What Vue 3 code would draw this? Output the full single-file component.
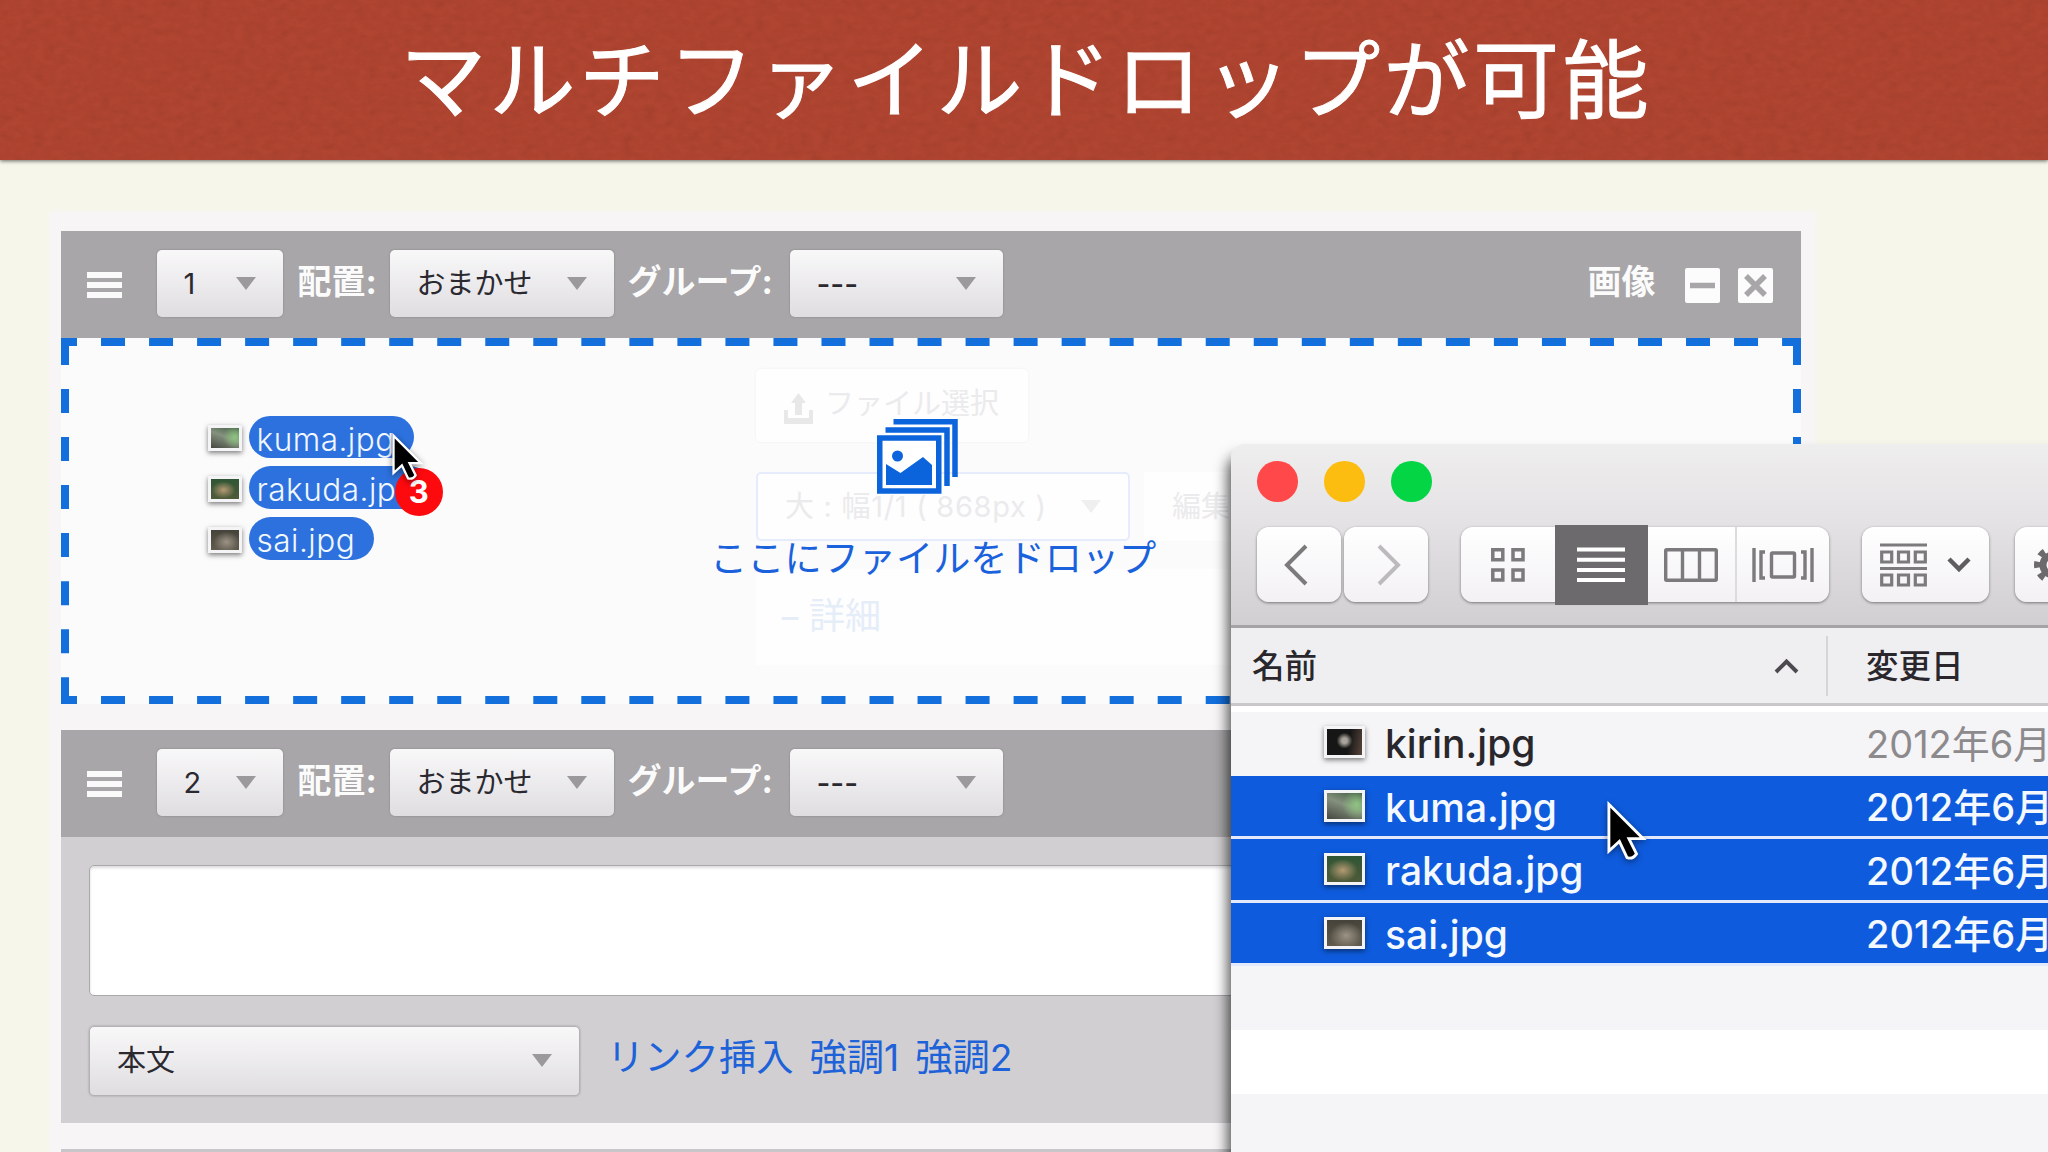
<script setup>
import { ref } from 'vue'

const units = ref([
  { id: 1, type: 'image' },
  { id: 2, type: 'text' }
])

const dragging = ref([
  { name: 'kuma.jpg', kind: 'kuma', width: 165 },
  { name: 'rakuda.jpg', kind: 'rakuda', width: 182 },
  { name: 'sai.jpg', kind: 'sai', width: 125 }
])

const files = ref([
  { name: 'kirin.jpg', kind: 'kirin', date: '2012年6月', selected: false },
  { name: 'kuma.jpg', kind: 'kuma', date: '2012年6月', selected: true },
  { name: 'rakuda.jpg', kind: 'rakuda', date: '2012年6月', selected: true },
  { name: 'sai.jpg', kind: 'sai', date: '2012年6月', selected: true }
])
</script>

<template>
  <div class="slide">
    <header class="title">
      <svg class="paper" width="2048" height="160">
        <filter id="grain">
          <feTurbulence type="fractalNoise" baseFrequency="0.09 0.14" numOctaves="4" seed="4" />
          <feColorMatrix values="0 0 0 0 0  0 0 0 0 0  0 0 0 0 0  0.5 0.3 0 0 -0.3" />
        </filter>
        <rect width="2048" height="160" filter="url(#grain)" />
      </svg>
      <h1>マルチファイルドロップが可能</h1>
    </header>

    <main class="editor">
      <section v-for="unit in units" :key="unit.id" class="unit">
        <div class="unit-head">
          <svg class="handle" viewBox="0 0 35 26">
            <path d="M0 3h35M0 13h35M0 23h35" stroke="#fafafa" stroke-width="6" />
          </svg>
          <div class="select order"><span>{{ unit.id }}</span><i class="arrow"></i></div>
          <b class="label label-align">配置:</b>
          <div class="select align"><span>おまかせ</span><i class="arrow"></i></div>
          <b class="label label-group">グループ:</b>
          <div class="select group"><span class="dashes">---</span><i class="arrow"></i></div>
          <div v-if="unit.type === 'image'" class="unit-tools">
            <b class="label">画像</b>
            <svg class="tool" viewBox="0 0 35 35">
              <rect width="35" height="35" rx="2" fill="#fcfcfc" />
              <path d="M5 17.5h25" stroke="#a8a6a8" stroke-width="5.5" />
            </svg>
            <svg class="tool" viewBox="0 0 35 35">
              <rect width="35" height="35" rx="2" fill="#fcfcfc" />
              <path d="M8 8l19 19M27 8l-19 19" stroke="#a8a6a8" stroke-width="5.5" />
            </svg>
          </div>
        </div>

        <div v-if="unit.type === 'image'" class="drop">
          <svg class="dashed" width="1740" height="366">
            <g stroke="#126fdc" stroke-width="8" stroke-dasharray="24 24.03">
              <path d="M0 4H1740M0 362H1740" stroke-dashoffset="8" />
              <path d="M4 0V366M1736 0V366" stroke-dashoffset="-3" />
            </g>
          </svg>

          <div class="drag-list">
            <div v-for="item in dragging" :key="item.name" class="drag-item">
              <i class="thumb thumb-s" :class="item.kind"></i>
              <span class="pill" :style="{ width: item.width + 'px' }">{{ item.name }}</span>
            </div>
          </div>

          <!-- ドロップ中は薄く表示される元のフォーム -->
          <div class="ghost">
            <div class="ghost-btn">
              <svg width="29" height="32" viewBox="0 0 29 32">
                <path d="M11 23V11H7l7.5-10L22 11h-4v12zM0 18h4v8h21v-8h4v14H0z" fill="#e9e8e9" />
              </svg>
              <span>ファイル選択</span>
            </div>
            <div class="ghost-row">
              <div class="ghost-select"><span>大 : 幅1/1 ( 868px )</span><i class="arrow"></i></div>
              <div class="ghost-edit">編集</div>
            </div>
            <div class="ghost-detail">− 詳細</div>
          </div>

          <div class="drop-message">
            <svg width="81" height="75" viewBox="0 0 81 75" fill="none" stroke="#0b64dc">
              <path d="M16.5 2.8H78V58M8.5 11H70V67" stroke-width="5.5" />
              <rect x="2.75" y="19" width="59" height="53" fill="#fff" stroke-width="5.5" />
              <circle cx="20.5" cy="37" r="5.5" fill="#0b64dc" stroke="none" />
              <path d="M9 45l14.5 9L46 38l9 8v20H9z" fill="#0b64dc" stroke="none" />
            </svg>
            <p>ここにファイルをドロップ</p>
          </div>

          <b class="badge">3</b>
          <svg class="cursor cursor-drag" viewBox="0 0 42 62">
            <path d="M2 3V52L13 42L21 59Q27 61 31 55L23 39H38Z" fill="#000" stroke="#fff" stroke-width="3" />
          </svg>
        </div>

        <div v-else class="text-body">
          <div class="textarea"></div>
          <div class="text-tools">
            <div class="select style"><span>本文</span><i class="arrow"></i></div>
            <div class="links"><a>リンク挿入</a><a>強調1</a><a>強調2</a></div>
          </div>
        </div>
      </section>
      <div class="unit-next"></div>
    </main>

    <aside class="finder">
      <div class="finder-bar">
        <div class="lights"><i class="red"></i><i class="yellow"></i><i class="green"></i></div>
        <div class="finder-tools">
          <div class="btn nav">
            <svg width="24" height="42" viewBox="0 0 24 42"><path d="M22 2L3 21l19 19" stroke="#7c7a7c" stroke-width="4" fill="none" /></svg>
          </div>
          <div class="btn nav nav-next">
            <svg width="24" height="42" viewBox="0 0 24 42"><path d="M2 2l19 19L2 40" stroke="#bcbabc" stroke-width="4" fill="none" /></svg>
          </div>
          <div class="btn views">
            <div class="view view-icon">
              <svg width="34" height="34" viewBox="0 0 34 34" fill="none" stroke="#7c7a7c" stroke-width="3.5">
                <path d="M1.8 1.8h10v10h-10zM22 1.8h10v10H22zM1.8 22h10v10h-10zM22 22h10v10H22z" />
              </svg>
            </div>
            <div class="view view-list">
              <svg width="48" height="36" viewBox="0 0 48 36"><path d="M0 2.5h48M0 12.7h48M0 22.9h48M0 33h48" stroke="#fff" stroke-width="4" /></svg>
            </div>
            <div class="view view-column">
              <svg width="54" height="34" viewBox="0 0 54 34" fill="none" stroke="#7c7a7c" stroke-width="3.4">
                <rect x="1.7" y="1.7" width="50.6" height="30.6" rx="1" />
                <path d="M18.5 2v30M35.5 2v30" />
              </svg>
            </div>
            <div class="view view-flow">
              <svg width="62" height="34" viewBox="0 0 62 34" fill="none" stroke="#7c7a7c" stroke-width="3.4">
                <rect x="19.5" y="5" width="23" height="24" rx="1" />
                <path d="M2 0v34M60 0v34M13 4H9v26h4M49 4h4v26h-4" />
              </svg>
            </div>
          </div>
          <div class="btn arrange">
            <svg width="47" height="44" viewBox="0 0 47 44" fill="none" stroke="#7c7a7c" stroke-width="3.2">
              <path d="M0 2h47M0 25.5h47" />
              <path d="M1.7 9h10v10h-10zM18.5 9h10v10h-10zM35.3 9h10v10h-10zM1.7 32h10v10h-10zM18.5 32h10v10h-10zM35.3 32h10v10h-10z" />
            </svg>
            <svg width="24" height="16" viewBox="0 0 24 16"><path d="M2 2l10 10L22 2" stroke="#5f5d60" stroke-width="4.5" fill="none" /></svg>
          </div>
          <div class="btn action">
            <svg width="38" height="38" viewBox="0 0 38 38" fill="none" stroke="#6c6a6d">
              <circle cx="19" cy="19" r="10" stroke-width="7" />
              <circle cx="19" cy="19" r="16" stroke-width="6" stroke-dasharray="6.28 6.28" stroke-dashoffset="3.14" />
            </svg>
          </div>
        </div>
      </div>

      <div class="columns">
        <div class="col-name">
          <span>名前</span>
          <svg width="25" height="16" viewBox="0 0 25 16"><path d="M2 14L12.5 3.5L23 14" stroke="#4c4a4e" stroke-width="4" fill="none" /></svg>
        </div>
        <div class="col-date">変更日</div>
      </div>

      <div class="file-list">
        <div v-for="file in files" :key="file.name" class="file" :class="{ selected: file.selected }">
          <i class="thumb" :class="file.kind"></i>
          <span class="file-name">{{ file.name }}</span>
          <span class="file-date">{{ file.date }}</span>
        </div>
        <div class="stripe"></div>
      </div>

      <svg class="cursor cursor-finder" viewBox="0 0 42 62">
        <path d="M2 3V52L13 42L21 59Q27 61 31 55L23 39H38Z" fill="#000" stroke="#fff" stroke-width="3" />
      </svg>
    </aside>
  </div>
</template>

<style>
body {
  margin: 0;
  overflow: hidden;
}
</style>

<style scoped>
* {
  box-sizing: border-box;
}

.slide {
  position: relative;
  width: 2048px;
  height: 1152px;
  overflow: hidden;
  background: #f7f6eb;
  font-family: Inter, "Noto Sans CJK JP", sans-serif;
  line-height: 1;
  white-space: nowrap;
}

/* タイトル */
.title {
  position: relative;
  display: flex;
  justify-content: center;
  height: 160px;
  background: #b04531;
  box-shadow: 0 1px 4px rgba(0, 0, 0, 0.6);
}

.paper {
  position: absolute;
  inset: 0;
  opacity: 0.18;
}

.title h1 {
  position: relative;
  margin: 0;
  padding-left: 4px;
  color: #fff;
  font-family: "Noto Sans CJK JP", sans-serif;
  font-size: 86px;
  font-weight: 400;
  line-height: 149px;
  letter-spacing: 3.4px;
  -webkit-text-stroke: 1px #fff;
}

/* エディタ */
.editor {
  width: 1765px;
  height: 940px;
  margin: 52px 0 0 50px;
  padding: 19px 14px 0 11px;
  background: #f7f5f6;
  box-shadow: 0 0 5px #f7f5f4;
}

.unit {
  margin-bottom: 26px;
}

.unit-head {
  display: flex;
  align-items: center;
  height: 106.5px;
  padding: 0 28px 2px 26px;
  background: #a8a6a8;
}

.handle {
  width: 35px;
  height: 26px;
  margin-right: 34.5px;
  position: relative;
  top: 2px;
}

.select {
  display: flex;
  align-items: center;
  justify-content: space-between;
  height: 67px;
  padding: 0 27px 0 27px;
  border-radius: 5px;
  background: linear-gradient(#f9f8f9, #dfdde0);
  box-shadow: 0 0 2px rgba(90, 90, 90, 0.5);
  color: #2b2930;
  font-size: 29px;
}

.order {
  width: 126px;
}

.align {
  width: 224px;
}

.group {
  width: 213px;
}

.dashes {
  font-size: 30px;
  font-weight: 500;
  padding-top: 2px;
}

.arrow {
  border: 10.5px solid transparent;
  border-top: 13px solid #9b999b;
  border-bottom: 0;
}

.label {
  color: #fbfbfb;
  font-size: 34px;
  position: relative;
  top: -1px;
}

.label-align {
  width: 92px;
  margin-left: 15px;
}

.label-group {
  width: 162px;
  margin-left: 14px;
}

.unit-tools {
  display: flex;
  align-items: center;
  margin-left: auto;
}

.unit-tools .label {
  margin-right: 29px;
}

.tool {
  width: 35px;
  height: 35px;
  position: relative;
  top: 2px;
}

.tool + .tool {
  margin-left: 18.5px;
}

/* ドロップ領域 */
.drop {
  position: relative;
  display: flex;
  height: 366.5px;
  background: #fcfbfc;
}

.dashed {
  position: absolute;
  left: 0;
  top: 0;
}

.drag-list {
  display: flex;
  flex-direction: column;
  gap: 8px;
  width: 547px;
  padding: 78px 0 0 146.5px;
}

.drag-item {
  display: flex;
  align-items: center;
  gap: 7px;
  height: 42.7px;
}

.thumb {
  flex: none;
  width: 41px;
  height: 32px;
  border: 3.5px solid #f4f4f6;
  box-shadow: 0 2px 5px rgba(0, 0, 0, 0.5);
}

.thumb-s {
  width: 34px;
  height: 26px;
  margin-top: 3px;
}

.kirin {
  background: radial-gradient(circle at 50% 45%, #a9a29a 0 12%, transparent 35%), linear-gradient(100deg, #151615 60%, #59453c);
}

.kuma {
  background: radial-gradient(circle at 85% 45%, #8fc482, transparent 45%), linear-gradient(20deg, #454840, #85917f 55%, #3e5b40);
}

.rakuda {
  background: radial-gradient(ellipse at 45% 55%, #b59a73, transparent 55%), linear-gradient(#2f5634, #4f5a39);
}

.sai {
  background: radial-gradient(ellipse at 55% 60%, #9c9486, transparent 60%), linear-gradient(#45433a, #615a4e);
}

.pill {
  height: 42.7px;
  padding-left: 8px;
  border-radius: 22px;
  background: #2d71de;
  color: #f1f7ff;
  font-size: 31.5px;
  font-weight: 300;
  line-height: 47px;
  letter-spacing: 0.5px;
}

.badge {
  position: absolute;
  left: 333.5px;
  top: 130px;
  width: 48.5px;
  height: 48.5px;
  border-radius: 50%;
  background: #fc0a0e;
  color: #fff;
  font-size: 31px;
  line-height: 48px;
  text-align: center;
}

.cursor {
  position: absolute;
  filter: drop-shadow(0 2px 3px rgba(0, 0, 0, 0.45));
}

.cursor-drag {
  left: 331px;
  top: 95px;
  width: 32px;
  height: 48px;
}

.ghost {
  display: flex;
  flex-direction: column;
  width: 632px;
  margin-left: 148px;
  padding-top: 31px;
  color: #ebeaec;
  font-size: 29px;
}

.ghost-btn {
  display: flex;
  align-items: center;
  gap: 12px;
  width: 272px;
  height: 73px;
  padding-left: 28px;
  border-radius: 5px;
  background: #fefefe;
  box-shadow: 0 0 3px #f0eff1;
}

.ghost-btn svg {
  margin-top: 6px;
}

.ghost-btn span {
  padding-bottom: 4px;
}

.ghost-row {
  display: flex;
  gap: 14px;
  margin-top: 30px;
}

.ghost-select {
  display: flex;
  align-items: center;
  justify-content: space-between;
  width: 374px;
  height: 69px;
  padding: 0 27px 0 27px;
  border: 2px solid #e6ebfd;
  border-radius: 5px;
  background: #fefefe;
  letter-spacing: 0.7px;
}

.ghost-select .arrow {
  border-top-color: #f0eff0;
}

.ghost-edit {
  flex: 1;
  height: 69px;
  padding-left: 28px;
  background: #fefefe;
  line-height: 70px;
}

.ghost-detail {
  height: 96px;
  margin-top: 28px;
  padding-left: 22px;
  background: #fefefe;
  color: #e5edf9;
  font-size: 36px;
  line-height: 94px;
  word-spacing: -3px;
}

.drop-message {
  position: absolute;
  left: 649px;
  top: 81px;
  display: flex;
  flex-direction: column;
}

.drop-message svg {
  margin-left: 167px;
}

.drop-message p {
  margin: 46px 0 0;
  color: #1a62dc;
  font-size: 37.2px;
}

/* テキストユニット */
.text-body {
  height: 286px;
  padding: 28px;
  background: #d1cfd1;
}

.textarea {
  height: 131px;
  border: 1px solid #aaa8aa;
  border-radius: 5px;
  background: #fff;
  box-shadow: inset 0 2px 3px #dddcde;
}

.text-tools {
  display: flex;
  align-items: center;
  margin-top: 30px;
}

.style {
  width: 491px;
  height: 70px;
  border: 1px solid #b3b1b3;
}

.links {
  display: flex;
  gap: 16px;
  margin: -5px 0 0 27px;
  color: #1d62d8;
  font-size: 37.3px;
}

.unit-next {
  height: 10px;
  background: #c8c6c8;
}

/* Finder */
.finder {
  position: absolute;
  left: 1231px;
  top: 444px;
  width: 850px;
  height: 740px;
  border-radius: 14px 0 0 0;
  background: #f5f4f6;
  box-shadow: -3px 12px 14px rgba(0, 0, 0, 0.7);
}

.finder-bar {
  height: 184px;
  border-bottom: 3px solid #a5a3a6;
  border-radius: 14px 0 0 0;
  background: linear-gradient(#efeeee, #e5e3e5 40%, #d1cfd2);
  padding: 17px 0 0 26px;
}

.lights {
  display: flex;
  gap: 26.5px;
}

.lights i {
  width: 40.5px;
  height: 40.5px;
  border-radius: 50%;
}

.red {
  background: #ff484a;
}

.yellow {
  background: #fdbd10;
}

.green {
  background: #04d545;
}

.finder-tools {
  display: flex;
  margin-top: 25.5px;
}

.btn {
  display: flex;
  flex: none;
  align-items: center;
  justify-content: center;
  height: 75px;
  border-radius: 12px;
  background: linear-gradient(#fff, #f3f1f4);
  box-shadow: 0 1px 3px rgba(0, 0, 0, 0.45);
}

.nav {
  width: 83.5px;
  padding-right: 6px;
}

.nav-next {
  margin-left: 3.5px;
  padding: 0 0 0 6px;
}

.views {
  width: 368px;
  margin-left: 33px;
}

.view {
  display: flex;
  align-items: center;
  justify-content: center;
  height: 75px;
}

.view-icon {
  width: 94px;
}

.view-list {
  width: 93.5px;
  height: 80px;
  background: #6c6a6d;
}

.view-column {
  width: 88.5px;
  border-right: 2px solid #dddbde;
}

.view-flow {
  width: 92px;
}

.arrange {
  gap: 20px;
  width: 127px;
  margin-left: 33px;
}

.action {
  justify-content: flex-start;
  width: 100px;
  margin-left: 26px;
  padding-left: 19px;
}

.columns {
  display: flex;
  align-items: center;
  height: 78px;
  border-bottom: 3px solid #c9c7ca;
  background: #efeef1;
  color: #29272c;
  font-size: 32.5px;
  font-weight: 500;
}

.col-name {
  display: flex;
  align-items: center;
  justify-content: space-between;
  width: 597px;
  height: 60px;
  padding: 0 27px 0 21px;
  border-right: 2px solid #d6d4d7;
}

.col-name span {
  padding-top: 3px;
}

.col-date {
  padding: 3px 0 0 38px;
}

.file-list {
  border-top: 6px solid #fff;
}

.file {
  display: flex;
  align-items: center;
  height: 63.5px;
  padding-left: 93px;
  border-bottom: 3px solid #e2e9fa;
  color: #29272c;
  font-size: 39px;
  font-weight: 500;
}

.file:first-child {
  border-bottom-color: #f5f4f6;
}

.file-name {
  width: 481px;
  margin-left: 20px;
  padding-top: 3px;
}

.file-date {
  padding-top: 3px;
  color: #8c8a8c;
  font-size: 38px;
  font-weight: 400;
}

.selected {
  background: #0e5bdd;
  color: #f4f8ff;
}

.selected .file-date {
  color: #f4f8ff;
  font-weight: 500;
}

.stripe {
  height: 63.5px;
  margin-top: 64px;
  background: #fff;
}

.cursor-finder {
  left: 376px;
  top: 357px;
  width: 40px;
  height: 60px;
}
</style>
